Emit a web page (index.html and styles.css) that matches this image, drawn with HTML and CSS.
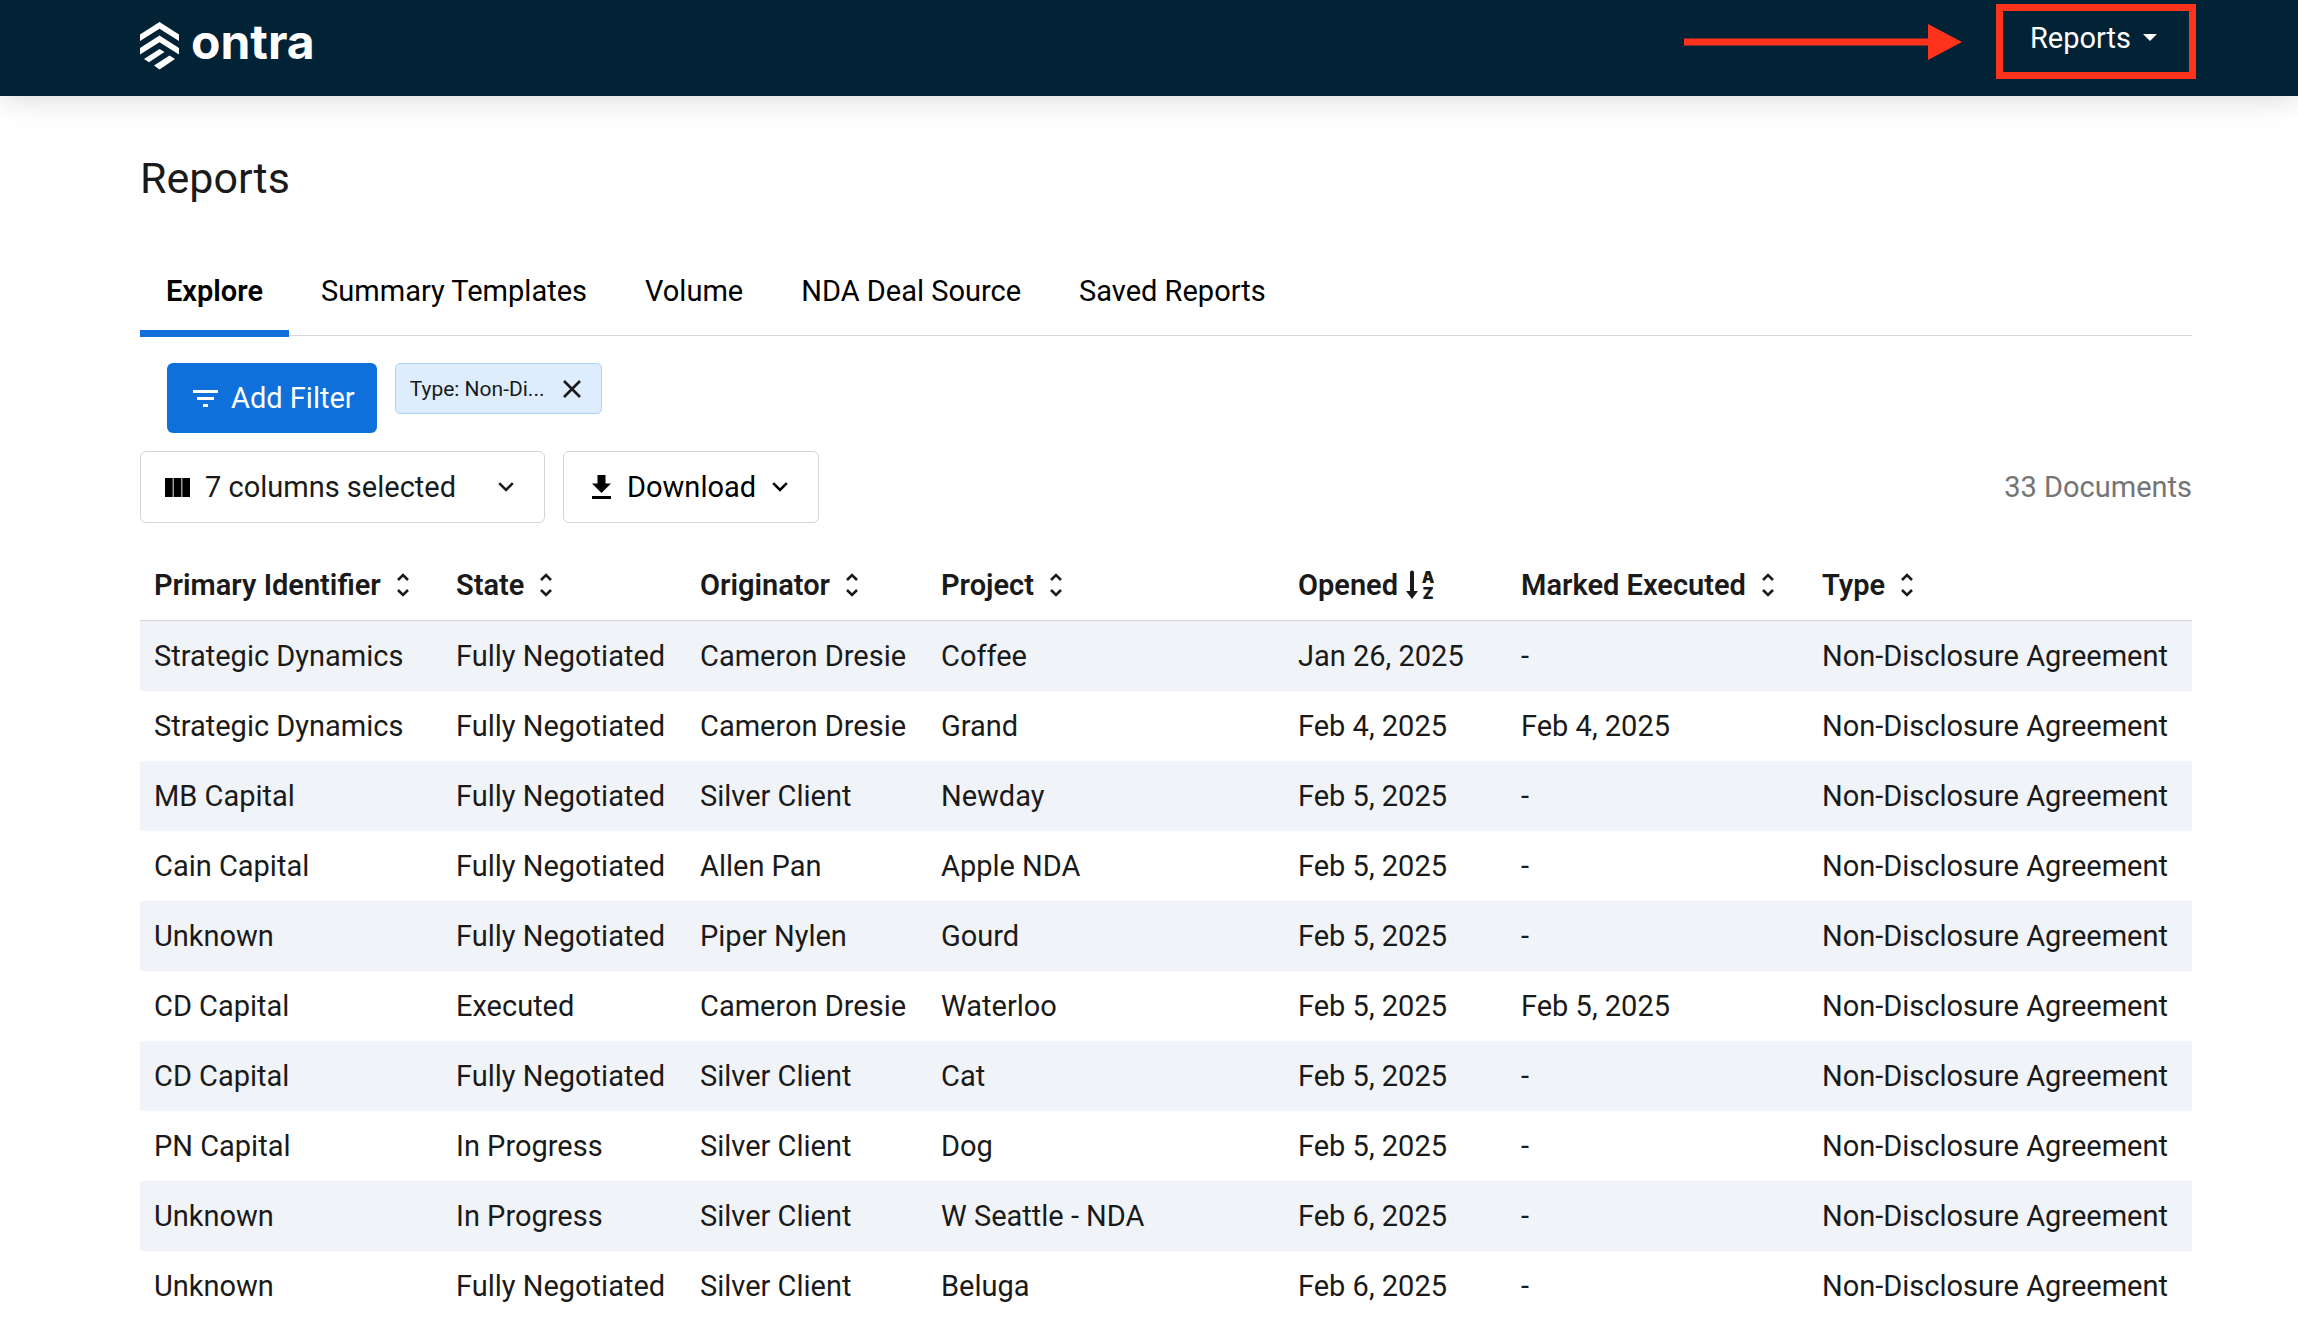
FILE: index.html
```html
<!DOCTYPE html>
<html lang="en">
<head>
    <meta charset="UTF-8">
    <meta name="viewport" content="width=device-width, initial-scale=1.0">
    <title>Reports</title>
    <link rel="stylesheet" href="styles.css">
</head>
<body>
    <svg class="sprite" aria-hidden="true">
        <symbol id="sort" viewBox="0 0 12 24">
            <path d="M1 7l5-5 5 5M1 17l5 5 5-5" fill="none" stroke="currentColor" stroke-width="2.6"/>
        </symbol>
        <symbol id="chevron" viewBox="0 0 16 10">
            <path d="M1.2 1.2L8 8l6.8-6.8" fill="none" stroke="currentColor" stroke-width="2.6"/>
        </symbol>
    </svg>
    <header class="header">
        <a href="#" class="logo">
            <svg class="logo-mark" viewBox="0 0 39 48" fill="#fff" aria-hidden="true">
                <path d="M0 12.5L19.5 0 39 12.5V19L19.5 6.8 0 19z"/>
                <path d="M0 26l19.5-12.5L39 26v6.5L19.500 20.3 0 32.5z"/>
                <path d="M4 37l15.5-10 5 3L9 40.3z"/>
                <path d="M14 43.5l15.5-10L35 37 19.5 47.5z"/>
            </svg>
            <span class="logo-text">ontra</span>
        </a>
        <div class="header-nav">
            <svg class="arrow" viewBox="0 0 278 36" fill="#ff331c" aria-hidden="true">
                <path d="M0 14.5h244V0l34 18-34 18V21.5H0z"/>
            </svg>
            <button type="button" class="nav-button">
                Reports
                <svg class="caret" viewBox="0 0 14 7" fill="currentColor" aria-hidden="true"><path d="M0 0h14L7 7z"/></svg>
            </button>
        </div>
    </header>
    <main class="page">
        <h1 class="title">Reports</h1>
        <nav class="tabs">
            <a href="#" class="tab active">Explore</a>
            <a href="#" class="tab">Summary Templates</a>
            <a href="#" class="tab">Volume</a>
            <a href="#" class="tab">NDA Deal Source</a>
            <a href="#" class="tab">Saved Reports</a>
        </nav>
        <div class="filters">
            <button type="button" class="add-filter">
                <svg class="icon-filter" viewBox="0 0 25 17" fill="currentColor" aria-hidden="true"><path d="M0 0h25v3H0zM4 7h17v3H4zM10 14h5v3h-5z"/></svg>
                Add Filter
            </button>
            <div class="chip">
                <span>Type: Non-Di...</span>
                <button type="button" class="chip-close" aria-label="Remove filter">
                    <svg viewBox="0 0 18 18" aria-hidden="true"><path d="M1 1l16 16M17 1L1 17" stroke="currentColor" stroke-width="2.6"/></svg>
                </button>
            </div>
        </div>
        <div class="toolbar">
            <div class="columns">
                <svg class="icon-columns" viewBox="0 0 25 19" aria-hidden="true"><path d="M0 0h25v19H0z" fill="#999"/><path d="M0 0h7.500v19H0zM9 0h7v19H9zM17.500 0H25v19h-7.500z"/></svg>
                <select class="columns-select" aria-label="Columns">
                    <option>7 columns selected</option>
                </select>
                <svg class="icon-chevron" aria-hidden="true"><use href="#chevron"/></svg>
            </div>
            <button type="button" class="download">
                <svg class="icon-download" viewBox="0 0 19 24" fill="currentColor" aria-hidden="true"><path d="M5.500 0h8v8.500H19L9.500 18 0 8.500h5.500zM0 21h19v3H0z"/></svg>
                Download
                <svg class="icon-chevron" aria-hidden="true"><use href="#chevron"/></svg>
            </button>
            <span class="count">33 Documents</span>
        </div>
        <table class="documents">
            <thead>
                <tr>
                    <th class="col-identifier"><button type="button" class="sort">Primary Identifier <svg class="icon-sort"><use href="#sort"/></svg></button></th>
                    <th class="col-state"><button type="button" class="sort">State <svg class="icon-sort"><use href="#sort"/></svg></button></th>
                    <th class="col-originator"><button type="button" class="sort">Originator <svg class="icon-sort"><use href="#sort"/></svg></button></th>
                    <th class="col-project"><button type="button" class="sort">Project <svg class="icon-sort"><use href="#sort"/></svg></button></th>
                    <th class="col-opened"><button type="button" class="sort sorted">Opened
                        <svg class="icon-az" viewBox="0 -4 28 36" fill="currentColor">
                            <path d="M4 1.500a2 2 0 0 1 4 0V20h4l-6 8-6-8h4z"/>
                            <text x="22" y="12" text-anchor="middle">A</text>
                            <text x="22" y="28" text-anchor="middle">Z</text>
                        </svg></button></th>
                    <th class="col-executed"><button type="button" class="sort">Marked Executed <svg class="icon-sort"><use href="#sort"/></svg></button></th>
                    <th><button type="button" class="sort">Type <svg class="icon-sort"><use href="#sort"/></svg></button></th>
                </tr>
            </thead>
            <tbody>
                <tr><td>Strategic Dynamics</td><td>Fully Negotiated</td><td>Cameron Dresie</td><td>Coffee</td><td>Jan 26, 2025</td><td>-</td><td>Non-Disclosure Agreement</td></tr>
                <tr><td>Strategic Dynamics</td><td>Fully Negotiated</td><td>Cameron Dresie</td><td>Grand</td><td>Feb 4, 2025</td><td>Feb 4, 2025</td><td>Non-Disclosure Agreement</td></tr>
                <tr><td>MB Capital</td><td>Fully Negotiated</td><td>Silver Client</td><td>Newday</td><td>Feb 5, 2025</td><td>-</td><td>Non-Disclosure Agreement</td></tr>
                <tr><td>Cain Capital</td><td>Fully Negotiated</td><td>Allen Pan</td><td>Apple NDA</td><td>Feb 5, 2025</td><td>-</td><td>Non-Disclosure Agreement</td></tr>
                <tr><td>Unknown</td><td>Fully Negotiated</td><td>Piper Nylen</td><td>Gourd</td><td>Feb 5, 2025</td><td>-</td><td>Non-Disclosure Agreement</td></tr>
                <tr><td>CD Capital</td><td>Executed</td><td>Cameron Dresie</td><td>Waterloo</td><td>Feb 5, 2025</td><td>Feb 5, 2025</td><td>Non-Disclosure Agreement</td></tr>
                <tr><td>CD Capital</td><td>Fully Negotiated</td><td>Silver Client</td><td>Cat</td><td>Feb 5, 2025</td><td>-</td><td>Non-Disclosure Agreement</td></tr>
                <tr><td>PN Capital</td><td>In Progress</td><td>Silver Client</td><td>Dog</td><td>Feb 5, 2025</td><td>-</td><td>Non-Disclosure Agreement</td></tr>
                <tr><td>Unknown</td><td>In Progress</td><td>Silver Client</td><td>W Seattle - NDA</td><td>Feb 6, 2025</td><td>-</td><td>Non-Disclosure Agreement</td></tr>
                <tr><td>Unknown</td><td>Fully Negotiated</td><td>Silver Client</td><td>Beluga</td><td>Feb 6, 2025</td><td>-</td><td>Non-Disclosure Agreement</td></tr>
            </tbody>
        </table>
    </main>
</body>
</html>
```
FILE: styles.css
```css
* {
    box-sizing: border-box;
}
body {
    height: 100vh;
    margin: 0;
    overflow: hidden;
    background-color: #fff;
    color: #1a1a1a;
    font-family: Roboto, sans-serif;
    font-size: 29px;
    line-height: 34px;
}
button, select {
    margin: 0;
    padding: 0;
    border: none;
    background: none;
    color: inherit;
    font: inherit;
    cursor: pointer;
}
svg {
    display: block;
    flex-shrink: 0;
}
.sprite {
    display: none;
}

/* header */
.header {
    display: flex;
    justify-content: space-between;
    align-items: flex-start;
    height: 96px;
    padding: 4px 102px 0 140px;
    background-color: #022235;
    box-shadow: 0 0 32px rgba(0, 0, 0, 0.18);
}
.logo {
    display: flex;
    align-items: center;
    gap: 12px;
    padding-top: 18px;
    color: #fff;
    text-decoration: none;
}
.logo-mark {
    width: 39px;
    height: 48px;
}
.logo-text {
    padding-bottom: 8px;
    font-family: Inter, sans-serif;
    font-size: 48px;
    font-weight: 700;
    line-height: 40px;
}
.header-nav {
    display: flex;
    align-items: center;
    gap: 34px;
}
.arrow {
    width: 278px;
    height: 36px;
}
.nav-button {
    display: flex;
    align-items: center;
    gap: 12px;
    width: 200px;
    height: 75px;
    padding: 0 0 8px 27px;
    border: 7px solid #ff331c;
    color: #fff;
}
.caret {
    width: 14px;
    height: 7px;
}

/* page */
.page {
    padding: 56px 106px 0 140px;
}
.title {
    margin: 0 0 62px;
    font-size: 43px;
    font-weight: 400;
    line-height: 52px;
}
.tabs {
    display: flex;
    gap: 6px;
    border-bottom: 1px solid #d8d8d8;
}
.tab {
    height: 71px;
    margin-bottom: -2px;
    padding: 8px 26px 0;
    border-bottom: 7px solid transparent;
    color: #000;
    text-decoration: none;
}
.tab.active {
    border-bottom-color: #0f6fdb;
    font-weight: 600;
}
.filters {
    display: flex;
    align-items: flex-start;
    gap: 18px;
    padding: 27px 27px 0;
}
.add-filter {
    display: flex;
    align-items: center;
    gap: 13px;
    height: 70px;
    padding: 0 22px 0 26px;
    border-radius: 6px;
    background-color: #0f6fdb;
    color: #fff;
}
.icon-filter {
    width: 25px;
    height: 17px;
}
.chip {
    display: flex;
    align-items: center;
    gap: 19px;
    height: 51px;
    padding: 0 20px 0 14px;
    border: 1px solid #a9d3fb;
    border-radius: 5px;
    background-color: #deedfe;
    font-size: 21px;
}
.chip-close svg {
    width: 18px;
    height: 18px;
}
.toolbar {
    display: flex;
    align-items: center;
    gap: 18px;
    margin-top: 18px;
}
.columns, .download {
    display: flex;
    align-items: center;
    height: 72px;
    border: 1px solid #d5d5d5;
    border-radius: 6px;
    background-color: #fff;
}
.columns {
    width: 405px;
    padding: 0 30px 0 24px;
    gap: 15px;
}
.columns-select {
    flex: 1;
    appearance: none;
}
.icon-columns {
    width: 25px;
    height: 19px;
}
.icon-chevron {
    width: 16px;
    height: 10px;
}
.download {
    gap: 16px;
    padding: 0 30px 0 28px;
    color: #000;
}
.icon-download {
    width: 19px;
    height: 24px;
}
.count {
    margin-left: auto;
    color: #757575;
}

/* table */
.documents {
    width: 100%;
    margin-top: 26px;
    border-collapse: separate;
    border-spacing: 0;
    table-layout: fixed;
    white-space: nowrap;
}
.documents th {
    height: 72px;
    padding: 0 0 0 14px;
    border-bottom: 1px solid #d5d5d5;
    text-align: left;
}
.documents td {
    height: 70px;
    padding: 0 0 0 14px;
}
.documents tbody tr:nth-child(odd) {
    background-color: #f0f3f8;
}
.col-identifier {width: 302px;}
.col-state {width: 244px;}
.col-originator {width: 241px;}
.col-project {width: 357px;}
.col-opened {width: 223px;}
.col-executed {width: 301px;}
.sort {
    display: flex;
    align-items: center;
    gap: 16px;
    font-weight: 600;
}
.sort.sorted {
    gap: 8px;
}
.icon-sort {
    width: 12px;
    height: 24px;
}
.icon-az {
    width: 28px;
    height: 36px;
    font-family: Inter, sans-serif;
    font-size: 16px;
    font-weight: 900;
}
```
